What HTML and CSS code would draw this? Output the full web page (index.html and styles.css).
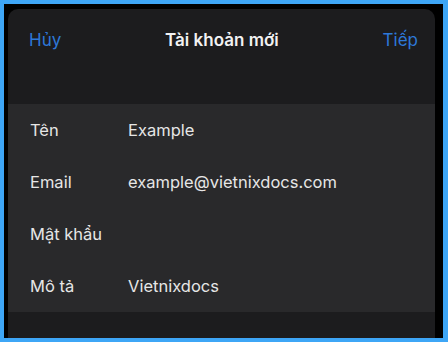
FILE: index.html
```html
<!DOCTYPE html>
<html lang="vi">
<head>
    <meta charset="UTF-8">
    <meta name="viewport" content="width=device-width, initial-scale=1.0">
    <title>Tài khoản mới</title>
    <link rel="stylesheet" href="styles.css">
</head>
<body>

    <div class="frame">
        <div class="sheet">

            <!-- NAV BAR -->
            <div class="nav">
                <span class="nav-btn">Hủy</span>
                <span class="nav-title">Tài khoản mới</span>
                <span class="nav-btn">Tiếp</span>
            </div>

            <!-- FORM -->
            <div class="group">
                <div class="row">
                    <span class="label">Tên</span>
                    <span class="value">Example</span>
                </div>
                <div class="row">
                    <span class="label">Email</span>
                    <span class="value">example@vietnixdocs.com</span>
                </div>
                <div class="row">
                    <span class="label">Mật khẩu</span>
                    <span class="value"></span>
                </div>
                <div class="row">
                    <span class="label">Mô tả</span>
                    <span class="value">Vietnixdocs</span>
                </div>
            </div>

        </div>
    </div>

</body>
</html>
```

FILE: styles.css
```css
* {
    margin: 0;
    padding: 0;
    box-sizing: border-box;
    font-family: Inter, "Noto Sans", sans-serif;
}

html, body {
    width: 448px;
    height: 342px;
    overflow: hidden;
}

body { background: #3ea6f6; }

.frame {
    margin: 4px 5px 4px 4px;
    height: 334px;
    background: #000;
    padding: 5px 8px 0 4px;
}

.sheet {
    height: 100%;
    background: #1c1c1e;
    border-radius: 10px 10px 0 0;
}

/* NAV BAR */
.nav {
    display: flex;
    justify-content: space-between;
    align-items: center;
    height: 62px;
    padding: 0 17px 0 21px;
}

.nav-btn {
    color: #2d78d8;
    font-size: 17px;
}

.nav-title {
    color: #f2f2f2;
    font-size: 17px;
    font-weight: 600;
}

/* FORM */
.group {
    margin-top: 33px;
    background: #29292b;
}

.row {
    display: flex;
    align-items: center;
    height: 52px;
    padding-left: 22px;
    font-size: 16.5px;
    color: #e6e6e6;
}

.label { width: 98px; }
```
